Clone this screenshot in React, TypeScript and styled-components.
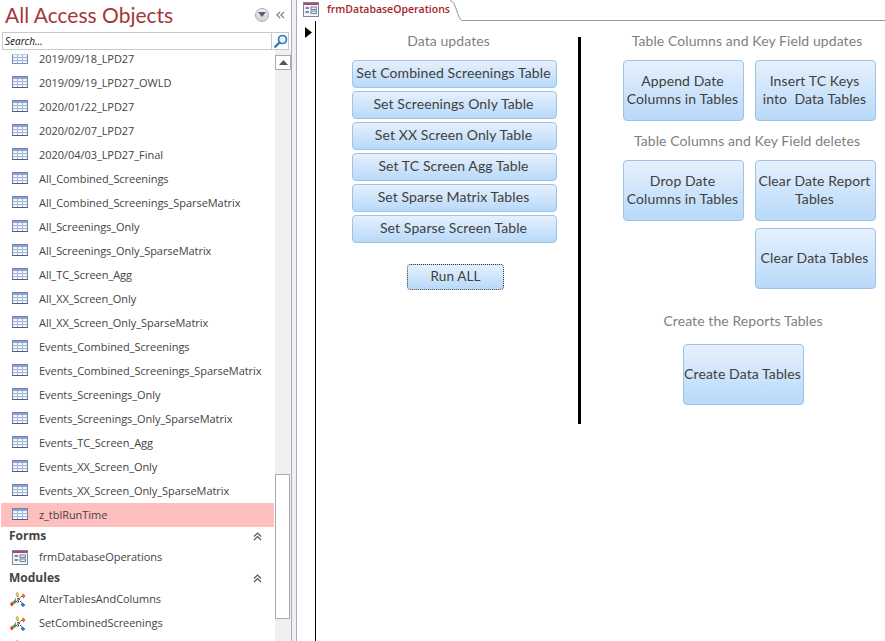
import React from 'react';
import styled, { createGlobalStyle } from 'styled-components';

const GlobalStyle = createGlobalStyle`
  html, body {
    margin: 0;
    padding: 0;
    background: #fff;
  }
  * {
    box-sizing: border-box;
  }
`;

const tables = [
  '2019/09/18_LPD27',
  '2019/09/19_LPD27_OWLD',
  '2020/01/22_LPD27',
  '2020/02/07_LPD27',
  '2020/04/03_LPD27_Final',
  'All_Combined_Screenings',
  'All_Combined_Screenings_SparseMatrix',
  'All_Screenings_Only',
  'All_Screenings_Only_SparseMatrix',
  'All_TC_Screen_Agg',
  'All_XX_Screen_Only',
  'All_XX_Screen_Only_SparseMatrix',
  'Events_Combined_Screenings',
  'Events_Combined_Screenings_SparseMatrix',
  'Events_Screenings_Only',
  'Events_Screenings_Only_SparseMatrix',
  'Events_TC_Screen_Agg',
  'Events_XX_Screen_Only',
  'Events_XX_Screen_Only_SparseMatrix',
  'z_tblRunTime',
];

const dataUpdates = [
  'Set Combined Screenings Table',
  'Set Screenings Only Table',
  'Set XX Screen Only Table',
  'Set TC Screen Agg Table',
  'Set Sparse Matrix Tables',
  'Set Sparse Screen Table',
];

const TableIcon = () => (
  <TableSvg width="16" height="12" viewBox="0 0 16 12">
    <rect x="0.5" y="0.5" width="15" height="11" fill="#f1f4fa" stroke="#6f86ad" />
    <rect x="1" y="1" width="14" height="2" fill="#8da4c9" />
    <path d="M1 5.5H15M1 8.5H15M5.5 3V11M10.5 3V11" stroke="#a3b6d4" fill="none" />
    <path d="M0 11.5H16" stroke="#4a5f85" />
  </TableSvg>
);

const FormIcon = () => (
  <svg width="16" height="15" viewBox="0 0 16 15">
    <rect x="0.5" y="0.5" width="15" height="14" fill="#f3f5fa" stroke="#7b88a4" />
    <rect x="1" y="1" width="14" height="2" fill="#b0476a" />
    <path d="M2.5 6H6M2.5 10H6" stroke="#56688c" strokeWidth="1.4" fill="none" />
    <rect x="8" y="5" width="5.5" height="2.5" fill="#e6ebf5" stroke="#56688c" strokeWidth="0.8" />
    <rect x="8" y="9" width="5.5" height="2.5" fill="#e6ebf5" stroke="#56688c" strokeWidth="0.8" />
  </svg>
);

const ModuleIcon = () => (
  <ModuleSvg width="16" height="16" viewBox="0 0 16 16">
    <path
      d="M7 5L12 12M12 5L5 12M5 8L11 8M8 5L8 12M6 10.5L11 10.5"
      stroke="#3d3d3d"
      strokeWidth="1"
      strokeDasharray="1 1"
      fill="none"
    />
    <path d="M7 0.5L9 2.5L8.5 6L6 5.5L5.5 2.5Z" fill="#d6c35c" />
    <path d="M13 2.5L15.5 5L13.5 7.5L11.5 5Z" fill="#e2602c" />
    <path d="M5 8.5L7 11L4.5 13L2.5 11Z" fill="#3f9c45" />
    <path d="M2 10.5L4 13L2 15.5L0 13Z" fill="#d8342b" />
    <path d="M12.5 11.5L15.5 14L13 16L10.5 13.5Z" fill="#2f72c4" />
  </ModuleSvg>
);

const ChevronsUp = () => (
  <svg width="9" height="9" viewBox="0 0 9 9">
    <path d="M1 4.5L4.5 1L8 4.5M1 8L4.5 4.5L8 8" stroke="#555" strokeWidth="1.2" fill="none" />
  </svg>
);

const App: React.FC = () => {
  return (
    <Page>
      <GlobalStyle />
      <NavPane>
        <NavHeader>
          <NavTitle>All Access Objects</NavTitle>
          <RoundMenu>
            <svg width="8" height="5" viewBox="0 0 8 5">
              <path d="M0 0H8L4 5Z" fill="#5c5f6a" />
            </svg>
          </RoundMenu>
          <Collapse>
            <svg width="9" height="8" viewBox="0 0 11 10">
              <path d="M5 1L1 5L5 9M10 1L6 5L10 9" stroke="#777" strokeWidth="1.4" fill="none" />
            </svg>
          </Collapse>
        </NavHeader>
        <SearchBox>
          <SearchText>Search...</SearchText>
          <SearchButton>
            <svg width="15" height="15" viewBox="0 0 15 15">
              <circle cx="9.5" cy="5.5" r="4" stroke="#2e7dbd" strokeWidth="1.7" fill="#e9f3fb" />
              <path d="M6.6 8.4L1.5 13.5" stroke="#2e7dbd" strokeWidth="2.4" />
            </svg>
          </SearchButton>
        </SearchBox>
        <NavBody>
          <NavList>
            <NavScroll>
              {tables.map((name) => (
                <NavRow key={name} $selected={name === 'z_tblRunTime'}>
                  <RowIcon><TableIcon /></RowIcon>
                  <RowLabel>{name}</RowLabel>
                </NavRow>
              ))}
              <SectionHeader>
                <SectionLabel>Forms</SectionLabel>
                <ChevronsUp />
              </SectionHeader>
              <NavRow $short>
                <RowIcon><FormIcon /></RowIcon>
                <RowLabel>frmDatabaseOperations</RowLabel>
              </NavRow>
              <ModulesHeader>
                <SectionLabel>Modules</SectionLabel>
                <ChevronsUp />
              </ModulesHeader>
              <NavRow>
                <RowIcon><ModuleIcon /></RowIcon>
                <RowLabel>AlterTablesAndColumns</RowLabel>
              </NavRow>
              <NavRow>
                <RowIcon><ModuleIcon /></RowIcon>
                <RowLabel>SetCombinedScreenings</RowLabel>
              </NavRow>
              <NavRow>
                <RowIcon><ModuleIcon /></RowIcon>
              </NavRow>
            </NavScroll>
          </NavList>
          <ScrollTrack>
            <ScrollUp>
              <svg width="9" height="5" viewBox="0 0 9 5">
                <path d="M0 5L4.5 0L9 5Z" fill="#555" />
              </svg>
            </ScrollUp>
            <ScrollThumb />
          </ScrollTrack>
        </NavBody>
      </NavPane>
      <Splitter />
      <Main>
        <TabStrip>
          <Tab>
            <FormIcon />
            <TabLabel>frmDatabaseOperations</TabLabel>
            <TabSlant width="12" height="21" viewBox="0 0 12 21">
              <path d="M0 0.5C3 1 4 3 5 6L8 14C9 17 10 20 12 20.5" stroke="#9a9a9a" fill="none" />
            </TabSlant>
          </Tab>
          <TabRest />
        </TabStrip>
        <FormArea>
          <RecordSelector>
            <svg width="7" height="11" viewBox="0 0 7 11">
              <path d="M0 0L7 5.5L0 11Z" fill="#000" />
            </svg>
          </RecordSelector>
          <LeftColumn>
            <LeftHeading>Data updates</LeftHeading>
            <ButtonStack>
              {dataUpdates.map((label) => (
                <WideButton key={label}>{label}</WideButton>
              ))}
            </ButtonStack>
            <RunButton>Run ALL</RunButton>
          </LeftColumn>
          <Divider />
          <RightColumn>
            <Heading $right>Table Columns and Key Field updates</Heading>
            <ButtonGrid>
              <TallButton>{'Append Date\nColumns in Tables'}</TallButton>
              <TallButton>{'Insert TC Keys\ninto  Data Tables'}</TallButton>
            </ButtonGrid>
            <MiddleHeading>Table Columns and Key Field deletes</MiddleHeading>
            <ButtonGrid>
              <TallButton>{'Drop Date\nColumns in Tables'}</TallButton>
              <TallButton>{'Clear Date Report\nTables'}</TallButton>
              <SecondRowButton>Clear Data Tables</SecondRowButton>
            </ButtonGrid>
            <ReportsHeading>Create the Reports Tables</ReportsHeading>
            <CreateButton>Create Data Tables</CreateButton>
          </RightColumn>
        </FormArea>
      </Main>
    </Page>
  );
};

export default App;

const Page = styled.div`
  display: flex;
  width: 885px;
  height: 641px;
  overflow: hidden;
  background: #fff;
`;

const NavPane = styled.aside`
  width: 291px;
  flex: none;
  display: flex;
  flex-direction: column;
  height: 100%;
`;

const NavHeader = styled.div`
  height: 32px;
  display: flex;
  align-items: center;
  padding: 0 4px 3px 5px;
`;

const NavTitle = styled.div`
  flex: 1;
  font-family: Lato, sans-serif;
  font-size: 21px;
  color: #a5373a;
  white-space: nowrap;
`;

const RoundMenu = styled.div`
  width: 14px;
  height: 14px;
  border-radius: 50%;
  border: 1px solid #a9abb3;
  background: linear-gradient(#f2f2f4, #cfd1d8);
  display: flex;
  align-items: center;
  justify-content: center;
  margin-right: 5px;
`;

const Collapse = styled.div`
  width: 13px;
  display: flex;
  align-items: center;
  justify-content: center;
`;

const SearchBox = styled.div`
  height: 18px;
  margin: 0 2px;
  display: flex;
  align-items: center;
  border: 1px solid #c9c9c9;
  background: #fff;
`;

const SearchText = styled.span`
  flex: 1;
  padding-left: 2px;
  font-family: "Open Sans", sans-serif;
  font-size: 10px;
  font-style: italic;
  color: #111;
`;

const SearchButton = styled.div`
  width: 17px;
  height: 100%;
  border-left: 1px solid #c9c9c9;
  display: flex;
  align-items: center;
  justify-content: center;
`;

const NavBody = styled.div`
  flex: 1;
  display: flex;
  min-height: 0;
`;

const NavList = styled.div`
  width: 275px;
  overflow: hidden;
`;

const NavScroll = styled.div`
  margin-top: -3px;
`;

const NavRow = styled.div<{ $selected?: boolean; $short?: boolean }>`
  height: ${(p) => (p.$short ? '20px' : '24px')};
  width: 273px;
  margin-left: 1px;
  display: flex;
  align-items: center;
  background: ${(p) => (p.$selected ? '#ffbfbf' : 'transparent')};

  /* the list is scrolled a little: the top of the first icon is out of view */
  &:first-child svg {
    clip-path: inset(3px 0 0 0);
  }
`;

const RowIcon = styled.span`
  width: 38px;
  flex: none;
  padding-left: 11px;
  display: flex;
  align-items: center;
`;

const TableSvg = styled.svg`
  margin-bottom: 3px;
`;

const ModuleSvg = styled.svg`
  margin-left: -2px;
`;

const RowLabel = styled.span`
  padding-bottom: 2px;
  font-family: "Open Sans", sans-serif;
  font-size: 11px;
  line-height: 11px;
  letter-spacing: -0.05px;
  color: #444;
  white-space: nowrap;
`;

const SectionHeader = styled.div`
  height: 20px;
  width: 273px;
  padding: 0 11px 2px 9px;
  display: flex;
  align-items: center;
  justify-content: space-between;
  font-family: "Open Sans", sans-serif;
  font-size: 12px;
  font-weight: 700;
  color: #444;
`;

const ModulesHeader = styled(SectionHeader)`
  padding: 2px 11px 0 9px;
`;

const SectionLabel = styled.span`
  padding-bottom: 2px;
`;

const ScrollTrack = styled.div`
  width: 16px;
  background: #f0f0f0;
`;

const ScrollUp = styled.div`
  margin-top: 5px;
  height: 15px;
  background: #fff;
  border: 1px solid #ababab;
  display: flex;
  align-items: center;
  justify-content: center;
`;

const ScrollThumb = styled.div`
  margin-top: 404px;
  width: 15px;
  height: 145px;
  background: #fff;
  border: 1px solid #ababab;
`;

const Splitter = styled.div`
  width: 6px;
  flex: none;
  background: #f0f0f2;
  border-left: 1px solid #a9abb8;
  border-right: 1px solid #a9abb8;
`;

const Main = styled.main`
  flex: 1;
  min-width: 0;
  display: flex;
  flex-direction: column;
`;

const TabStrip = styled.div`
  height: 21px;
  display: flex;
  flex: none;
`;

const Tab = styled.div`
  position: relative;
  width: 165px;
  flex: none;
  display: flex;
  align-items: flex-start;
  padding: 2px 0 0 6px;
  gap: 8px;
`;

const TabLabel = styled.span`
  font-family: "Open Sans", sans-serif;
  font-size: 10.5px;
  font-weight: 600;
  color: #a4262c;
  line-height: 14px;
`;

const TabSlant = styled.svg`
  position: absolute;
  top: 0;
  right: 0;
`;

const TabRest = styled.div`
  flex: 1;
  border-bottom: 1px solid #9a9a9a;
`;

const FormArea = styled.div`
  flex: 1;
  display: flex;
  min-height: 0;
`;

const RecordSelector = styled.div`
  width: 19px;
  flex: none;
  padding: 3px 0 0 8px;
  border-right: 1px solid #000;
`;

const LeftColumn = styled.section`
  width: 262px;
  flex: none;
  padding: 10px 0 0 36px;
`;

const Heading = styled.h2<{ $right?: boolean }>`
  margin: 0 0 9px;
  height: 20px;
  padding-right: ${(p) => (p.$right ? '5px' : '0')};
  font-family: Lato, sans-serif;
  font-size: 14px;
  font-weight: 400;
  line-height: 20px;
  letter-spacing: 0.08px;
  color: #7f7f7f;
  text-align: center;
  white-space: nowrap;
`;

const LeftHeading = styled(Heading)`
  width: 205px;
  padding-right: 12px;
`;

const MiddleHeading = styled(Heading)`
  margin-top: 10px;
  padding-right: 5px;
`;

const ReportsHeading = styled(Heading)`
  margin: 22px 0 13px;
  padding-right: 13px;
`;

const ButtonStack = styled.div`
  display: flex;
  flex-direction: column;
  gap: 3px;
  width: 205px;
`;

const AccessButton = styled.button`
  padding: 0 2px 2px 0;
  display: block;
  font-family: Lato, sans-serif;
  font-size: 14px;
  line-height: 18px;
  letter-spacing: 0.1px;
  color: #404040;
  white-space: pre;
  text-align: center;
  border: 1px solid #9dc3ea;
  border-radius: 4px;
  background: linear-gradient(#e6f0fc, #b8d9f9);
`;

const WideButton = styled(AccessButton)`
  width: 205px;
  height: 28px;
`;

const RunButton = styled(AccessButton)`
  width: 97px;
  height: 26px;
  margin: 21px 0 0 55px;
  padding: 0 0 2px 0;
  border: 1px dotted #2f3d52;
  font-size: 13.5px;
`;

const Divider = styled.div`
  width: 3px;
  height: 387px;
  flex: none;
  margin-top: 16px;
  background: #000;
`;

const RightColumn = styled.section`
  width: 295px;
  flex: none;
  padding: 10px 0 0 42px;
`;

const ButtonGrid = styled.div`
  display: grid;
  grid-template-columns: 121px 121px;
  column-gap: 11px;
  row-gap: 7px;
`;

const TallButton = styled(AccessButton)`
  height: 61px;
`;

const SecondRowButton = styled(TallButton)`
  grid-column: 2;
`;

const CreateButton = styled(TallButton)`
  width: 121px;
  margin-left: 60px;
`;
